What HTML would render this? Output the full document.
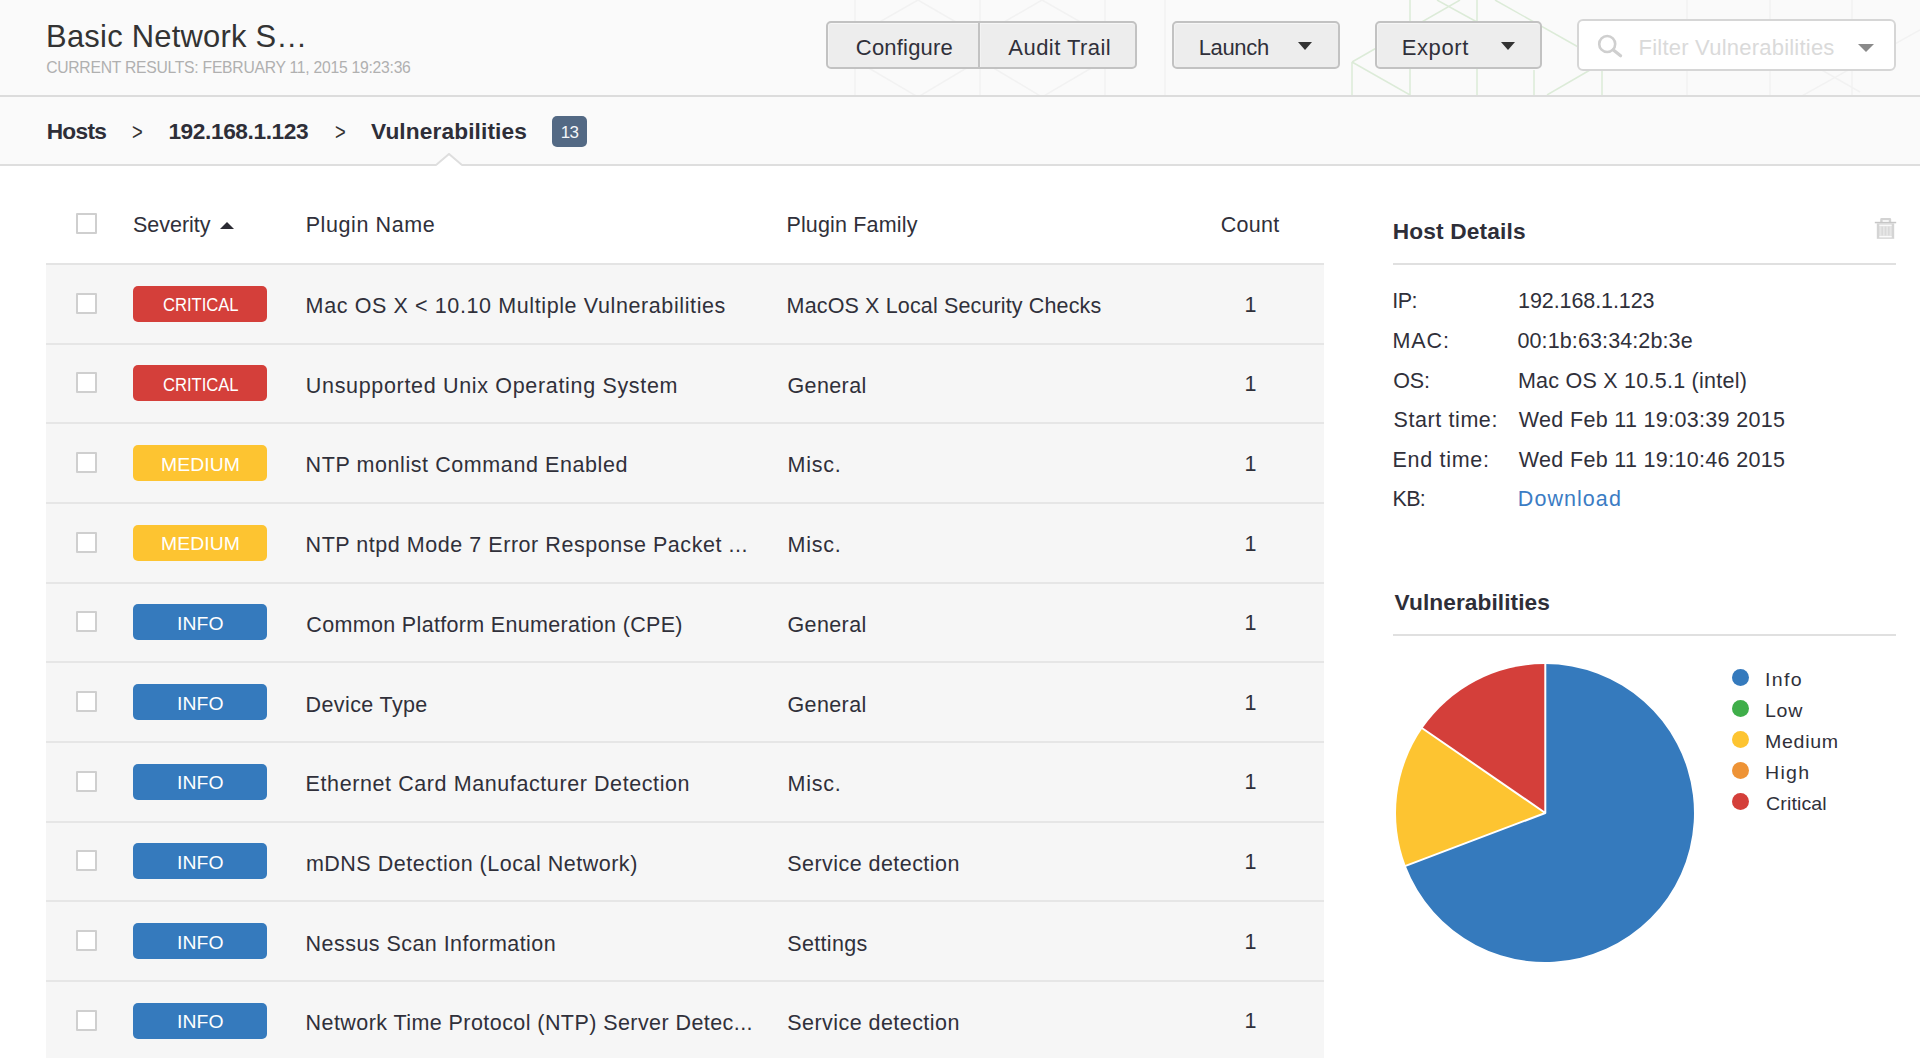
<!DOCTYPE html>
<html lang="en">
<head>
<meta charset="utf-8">
<title>Nessus - Basic Network Scan</title>
<style>
*{box-sizing:border-box;margin:0;padding:0}
html,body{width:1920px;height:1058px;overflow:hidden;background:#fff}
body{font-family:"Liberation Sans","DejaVu Sans",sans-serif;color:#333;position:relative;font-size:21.5px}
.t{position:absolute;white-space:nowrap;line-height:30px;font-size:21.5px;color:#30303a}
.t-title{font-size:30.9px;line-height:40px;color:#333}
.t-sub{font-size:15.7px;line-height:22px;color:#b0b0b0}
.t-crumb{font-weight:bold;font-size:22.7px;color:#2e2e38}
.t-gt{font-size:23px;color:#333;transform:scaleX(.8);transform-origin:0 50%}
.t-btn{font-size:22px}
.t-filter{font-size:22px;color:#dadada}
.t-sev{font-size:18px;line-height:22px;color:#fff;transform-origin:0 50%}
.t-h3{font-weight:bold;font-size:22.7px;color:#2e2e38}
.t-link{color:#3b7cc4}
.t-lg{font-size:17.8px;line-height:26px;transform:scaleX(1.1);transform-origin:0 50%}
/* top bar */
#topbar{position:absolute;left:0;top:0;width:1920px;height:97px;background:#fafafa;border-bottom:2px solid #dcdcdc;overflow:hidden}
#pattern{position:absolute;left:0;top:0}
.btn{position:absolute;top:21px;height:48px;background:#ededed;border:2px solid #c2c2c2;border-radius:5px;box-shadow:inset 0 1px 0 #f6f6f6,inset 1px 0 0 #f3f3f3}
.caret{position:absolute;width:0;height:0;border-left:7.5px solid transparent;border-right:7.5px solid transparent;border-top:8.5px solid #333}
#filter{position:absolute;left:1577px;top:19px;width:319px;height:52px;background:#fff;border:2px solid #d6d6d6;border-radius:6px}
/* breadcrumb */
#crumbs{position:absolute;left:0;top:97px;width:1920px;height:69px;background:#fafafa;border-bottom:2px solid #dedede}
#badge13{position:absolute;left:552px;top:116px;width:35px;height:31px;border-radius:5px;background:#536984;color:#f4f6f9;font-size:17px;line-height:33px;text-align:center;letter-spacing:-.6px}
#notch{position:absolute;left:436px;top:153px}
/* table */
#hline{position:absolute;left:46px;top:263px;width:1278px;height:2px;background:#e4e4e4}
.row{position:absolute;left:46px;width:1278px;height:79.65px;background:#f6f6f6;border-bottom:2px solid #e6e6e6}
.cb{position:absolute;left:30px;top:27.800px;width:21px;height:21px;background:#fff;border:2px solid #cfcfcf;border-radius:1px}
.sev{position:absolute;left:87px;top:20.800px;width:133.500px;height:36px;border-radius:5px}
.crit{background:#d43f3a}.med{background:#fdc431}.info{background:#357abd}
/* side */
.hr{position:absolute;left:1393px;width:503px;height:2px;background:#e0e0e0}
.dot{position:absolute;left:1731.5px;width:17px;height:17px;border-radius:50%}
</style>
</head>
<body>
<div id="topbar">
  <svg id="pattern" width="1920" height="97" viewBox="0 0 1920 97" fill="none" stroke-width="1.5">
    <g stroke="#f2f2f2">
      <path d="M855 0V97M980 0V97M1105 0V97M1165 0V97M918 0L855 36M918 0L980 36M1042 0L980 36M1042 0L1105 36M855 60L918 97M980 60L918 97M980 60L1042 97M1105 60L1042 97M1687 0V97M1770 0V97M1852 0V97M1735 20L1860 92M1920 30L1800 97"/>
    </g>
    <g stroke="#dcebd8">
      <path d="M1352 62V97M1410 0V97M1477 0V97M1534 70V97M1602 70V97M1352 62L1460 0M1352 62L1410 95M1437 0L1477 22M1495 0L1580 48M1590 70L1547 95"/>
    </g>
  </svg>
  <div class="btn" style="left:826px;width:154px;border-radius:5px 0 0 5px"></div>
  <div class="btn" style="left:978px;width:159px;border-radius:0 5px 5px 0"></div>
  <div class="btn" style="left:1172px;width:168px"><div class="caret" style="left:124px;top:19px"></div></div>
  <div class="btn" style="left:1375px;width:167px"><div class="caret" style="left:124px;top:19px"></div></div>
  <div id="filter">
    <svg style="position:absolute;left:18px;top:13px" width="28" height="26" viewBox="0 0 28 26" fill="none" stroke="#cfcfcf" stroke-width="3" stroke-linecap="round"><circle cx="10.200" cy="10" r="8" stroke-width="2.600"/><path d="M16.400 16L23.600 21.800" stroke-width="3.200"/></svg>
    <div class="caret" style="left:279px;top:23px;border-top-color:#8a8a8a;border-left-width:8px;border-right-width:8px"></div>
  </div>
</div>
<div class="t t-title" style="left:46.12px;top:16.70px;letter-spacing:0.24px">Basic Network S…</div>
<div class="t t-sub" style="left:46.13px;top:57.32px;letter-spacing:-0.25px">CURRENT RESULTS: FEBRUARY 11, 2015 19:23:36</div>
<div class="t t-btn" style="left:855.83px;top:33.40px;letter-spacing:0.20px">Configure</div>
<div class="t t-btn" style="left:1008.35px;top:33.40px;letter-spacing:0.45px">Audit Trail</div>
<div class="t t-btn" style="left:1198.65px;top:33.40px;letter-spacing:-0.33px">Launch</div>
<div class="t t-btn" style="left:1401.79px;top:33.44px;letter-spacing:0.58px">Export</div>
<div class="t t-filter" style="left:1638.58px;top:32.50px;letter-spacing:0.22px">Filter Vulnerabilities</div>

<div id="crumbs"></div>
<div class="t t-crumb" style="left:46.65px;top:116.20px;letter-spacing:-0.68px">Hosts</div>
<div class="t t-gt" style="left:131.99px;top:117.00px">&gt;</div>
<div class="t t-crumb" style="left:168.39px;top:116.20px;letter-spacing:-0.40px">192.168.1.123</div>
<div class="t t-gt" style="left:335.46px;top:117.00px">&gt;</div>
<div class="t t-crumb" style="left:370.98px;top:116.20px;letter-spacing:0.12px">Vulnerabilities</div>
<div id="badge13">13</div>
<svg id="notch" width="26" height="13" viewBox="0 0 26 13"><path d="M0 13L13 1L26 13Z" fill="#fff"/><path d="M0 12L13 1L26 12" fill="none" stroke="#dedede" stroke-width="2"/></svg>

<div id="tbl">
<div class="cb" style="left:76px;top:213px"></div>
<div class="t t-cell" style="left:133.08px;top:209.76px;letter-spacing:-0.05px">Severity</div>
<div class="caret" style="left:219.800px;top:221.500px;border-top:0;border-bottom:7px solid #2b2b33;border-left-width:7.100px;border-right-width:7.100px"></div>
<div class="t t-cell" style="left:305.65px;top:209.88px;letter-spacing:0.59px">Plugin Name</div>
<div class="t t-cell" style="left:786.40px;top:209.76px;letter-spacing:0.17px">Plugin Family</div>
<div class="t t-cell" style="left:1220.84px;top:209.88px;letter-spacing:0.27px">Count</div>
<div id="hline"></div>
<div class="row" style="top:265.00px"><div class="cb"></div><div class="sev crit"></div><div class="t t-sev" style="left:116.95px;top:29.20px;letter-spacing:-0.05px;transform:scaleX(0.925)">CRITICAL</div><div class="t t-cell" style="left:259.62px;top:26.15px;letter-spacing:0.61px">Mac OS X &lt; 10.10 Multiple Vulnerabilities</div><div class="t t-cell" style="left:740.62px;top:26.15px;letter-spacing:0.14px">MacOS X Local Security Checks</div><div class="t t-cell" style="left:1198.38px;top:24.73px">1</div></div>
<div class="row" style="top:344.65px"><div class="cb"></div><div class="sev crit"></div><div class="t t-sev" style="left:116.89px;top:29.20px;letter-spacing:-0.05px;transform:scaleX(0.925)">CRITICAL</div><div class="t t-cell" style="left:259.87px;top:26.45px;letter-spacing:0.67px">Unsupported Unix Operating System</div><div class="t t-cell" style="left:741.38px;top:26.49px;letter-spacing:0.41px">General</div><div class="t t-cell" style="left:1198.38px;top:24.68px">1</div></div>
<div class="row" style="top:424.30px"><div class="cb"></div><div class="sev med"></div><div class="t t-sev" style="left:114.51px;top:29.93px;letter-spacing:0.06px;transform:scaleX(1.075)">MEDIUM</div><div class="t t-cell" style="left:259.62px;top:25.75px;letter-spacing:0.58px">NTP monlist Command Enabled</div><div class="t t-cell" style="left:741.57px;top:25.75px;letter-spacing:0.73px">Misc.</div><div class="t t-cell" style="left:1198.38px;top:24.63px">1</div></div>
<div class="row" style="top:503.95px"><div class="cb"></div><div class="sev med"></div><div class="t t-sev" style="left:114.51px;top:29.20px;letter-spacing:0.06px;transform:scaleX(1.075)">MEDIUM</div><div class="t t-cell" style="left:259.62px;top:26.05px;letter-spacing:0.54px">NTP ntpd Mode 7 Error Response Packet ...</div><div class="t t-cell" style="left:741.57px;top:26.05px;letter-spacing:0.73px">Misc.</div><div class="t t-cell" style="left:1198.38px;top:24.58px">1</div></div>
<div class="row" style="top:583.60px"><div class="cb"></div><div class="sev info"></div><div class="t t-sev" style="left:130.72px;top:29.20px;letter-spacing:0.08px;transform:scaleX(1.075)">INFO</div><div class="t t-cell" style="left:260.37px;top:26.53px;letter-spacing:0.33px">Common Platform Enumeration (CPE)</div><div class="t t-cell" style="left:741.38px;top:26.39px;letter-spacing:0.41px">General</div><div class="t t-cell" style="left:1198.38px;top:24.53px">1</div></div>
<div class="row" style="top:663.25px"><div class="cb"></div><div class="sev info"></div><div class="t t-sev" style="left:130.72px;top:29.89px;letter-spacing:0.08px;transform:scaleX(1.075)">INFO</div><div class="t t-cell" style="left:259.62px;top:26.65px;letter-spacing:0.38px">Device Type</div><div class="t t-cell" style="left:741.38px;top:26.69px;letter-spacing:0.41px">General</div><div class="t t-cell" style="left:1198.38px;top:24.48px">1</div></div>
<div class="row" style="top:742.90px"><div class="cb"></div><div class="sev info"></div><div class="t t-sev" style="left:130.72px;top:29.20px;letter-spacing:0.08px;transform:scaleX(1.075)">INFO</div><div class="t t-cell" style="left:259.62px;top:25.95px;letter-spacing:0.59px">Ethernet Card Manufacturer Detection</div><div class="t t-cell" style="left:741.57px;top:25.95px;letter-spacing:0.73px">Misc.</div><div class="t t-cell" style="left:1198.38px;top:24.43px">1</div></div>
<div class="row" style="top:822.55px"><div class="cb"></div><div class="sev info"></div><div class="t t-sev" style="left:130.72px;top:29.20px;letter-spacing:0.08px;transform:scaleX(1.075)">INFO</div><div class="t t-cell" style="left:259.88px;top:26.31px;letter-spacing:0.51px">mDNS Detection (Local Network)</div><div class="t t-cell" style="left:741.23px;top:26.43px;letter-spacing:0.45px">Service detection</div><div class="t t-cell" style="left:1198.38px;top:24.38px">1</div></div>
<div class="row" style="top:902.20px"><div class="cb"></div><div class="sev info"></div><div class="t t-sev" style="left:130.72px;top:29.84px;letter-spacing:0.08px;transform:scaleX(1.075)">INFO</div><div class="t t-cell" style="left:259.62px;top:26.55px;letter-spacing:0.45px">Nessus Scan Information</div><div class="t t-cell" style="left:741.23px;top:26.73px;letter-spacing:0.33px">Settings</div><div class="t t-cell" style="left:1198.38px;top:24.33px">1</div></div>
<div class="row" style="top:981.85px"><div class="cb"></div><div class="sev info"></div><div class="t t-sev" style="left:130.72px;top:29.20px;letter-spacing:0.08px;transform:scaleX(1.075)">INFO</div><div class="t t-cell" style="left:259.62px;top:25.85px;letter-spacing:0.43px">Network Time Protocol (NTP) Server Detec...</div><div class="t t-cell" style="left:741.23px;top:26.03px;letter-spacing:0.45px">Service detection</div><div class="t t-cell" style="left:1198.38px;top:24.28px">1</div></div>
</div>

<div id="side">
  <div class="t t-h3" style="left:1392.63px;top:216.30px;letter-spacing:0.16px">Host Details</div>
  <svg style="position:absolute;left:1874px;top:216px" width="23" height="24" viewBox="0 0 23 24">
    <path d="M6.2 6V3.4Q6.2 2 7.600 2H15.800Q17.200 2 17.200 3.400V6H14.800V4.300H8.600V6Z" fill="#d3d3d3"/>
    <rect x="0.800" y="5.800" width="21.400" height="1.500" fill="#c6c6c6"/>
    <path d="M2.800 7.300H20.200V22.800H2.800Z" fill="#d4d4d4"/>
    <rect x="5.300" y="9.300" width="12.400" height="11.600" fill="#e6e6e6"/>
    <rect x="5.300" y="8.600" width="12.400" height="1.200" fill="#fff"/>
    <rect x="5.300" y="20.200" width="12.400" height="1.200" fill="#fff"/>
    <path d="M8.200 10.500V19.600M11.500 10.500V19.600M14.800 10.500V19.600" stroke="#d9d9d9" stroke-width="1.600"/>
  </svg>
  <div class="hr" style="top:263px"></div>
  <div class="t t-cell" style="left:1392.37px;top:285.88px;letter-spacing:-0.62px">IP:</div><div class="t t-cell" style="left:1518.10px;top:285.76px;letter-spacing:-0.09px">192.168.1.123</div>
<div class="t t-cell" style="left:1392.46px;top:326.14px;letter-spacing:0.92px">MAC:</div><div class="t t-cell" style="left:1517.49px;top:326.14px;letter-spacing:0.11px">00:1b:63:34:2b:3e</div>
<div class="t t-cell" style="left:1393.31px;top:365.68px;letter-spacing:-0.15px">OS:</div><div class="t t-cell" style="left:1517.91px;top:365.56px;letter-spacing:0.25px">Mac OS X 10.5.1 (intel)</div>
<div class="t t-cell" style="left:1393.61px;top:405.00px;letter-spacing:0.58px">Start time:</div><div class="t t-cell" style="left:1518.84px;top:405.18px;letter-spacing:0.33px">Wed Feb 11 19:03:39 2015</div>
<div class="t t-cell" style="left:1392.46px;top:445.26px;letter-spacing:0.70px">End time:</div><div class="t t-cell" style="left:1518.84px;top:444.58px;letter-spacing:0.33px">Wed Feb 11 19:10:46 2015</div>
<div class="t t-cell" style="left:1392.46px;top:483.86px;letter-spacing:-0.64px">KB:</div><div class="t t-cell t-link" style="left:1517.81px;top:483.80px;letter-spacing:1.06px">Download</div>
  <div class="t t-h3" style="left:1394.58px;top:586.80px;letter-spacing:0.08px">Vulnerabilities</div>
  <div class="hr" style="top:634px"></div>
  <svg style="position:absolute;left:1385px;top:653px" width="320" height="320" viewBox="-160 -160 320 320">
    <path d="M0 0L0 -149.0A149.0 149.0 0 1 1 -139.32 52.84Z" fill="#357abd"/>
    <path d="M0 0L-139.32 52.84A149.0 149.0 0 0 1 -122.62 -84.64Z" fill="#fdc431"/>
    <path d="M0 0L-122.62 -84.64A149.0 149.0 0 0 1 0 -149.0Z" fill="#d43f3a"/>
    <path d="M0.3 -150.0L0.3 0L-140.71 53.36M0.3 0L-123.85 -85.49" fill="none" stroke="#fff" stroke-width="2" stroke-linejoin="round"/>
  </svg>
  <div class="dot" style="top:668.6px;background:#357abd"></div>
  <div class="dot" style="top:699.9px;background:#3fae49"></div>
  <div class="dot" style="top:730.9px;background:#fdc431"></div>
  <div class="dot" style="top:762.2px;background:#ee9336"></div>
  <div class="dot" style="top:793.2px;background:#d43f3a"></div>
  <div class="t t-lg" style="left:1765.13px;top:666.58px;letter-spacing:1.25px">Info</div>
<div class="t t-lg" style="left:1765.15px;top:698.13px;letter-spacing:0.64px">Low</div>
<div class="t t-lg" style="left:1765.15px;top:729.13px;letter-spacing:0.64px">Medium</div>
<div class="t t-lg" style="left:1765.15px;top:760.30px;letter-spacing:1.17px">High</div>
<div class="t t-lg" style="left:1766.05px;top:791.28px;letter-spacing:0.12px">Critical</div>
</div>
</body>
</html>
